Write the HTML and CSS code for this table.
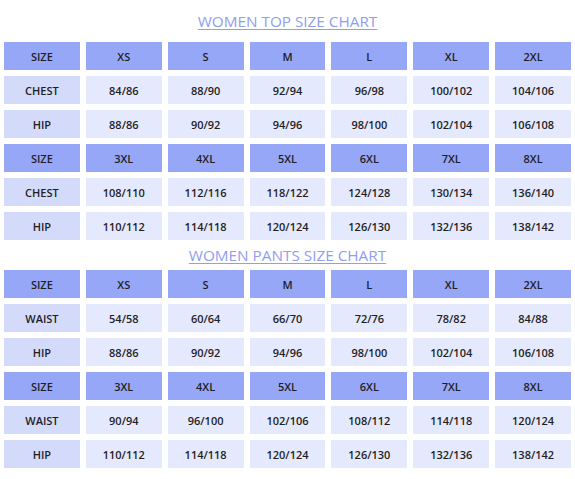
FILE: index.html
```html
<!DOCTYPE html>
<html>
<head>
<meta charset="utf-8">
<link rel="stylesheet" href="styles.css">
</head>
<body>
<div class="page">
  <h2 class="title title-first">WOMEN TOP SIZE CHART</h2>
  <div class="chart">
    <div class="cell head">SIZE</div><div class="cell head">XS</div><div class="cell head">S</div><div class="cell head">M</div><div class="cell head">L</div><div class="cell head">XL</div><div class="cell head">2XL</div>
    <div class="cell label">CHEST</div><div class="cell">84/86</div><div class="cell">88/90</div><div class="cell">92/94</div><div class="cell">96/98</div><div class="cell">100/102</div><div class="cell">104/106</div>
    <div class="cell label">HIP</div><div class="cell">88/86</div><div class="cell">90/92</div><div class="cell">94/96</div><div class="cell">98/100</div><div class="cell">102/104</div><div class="cell">106/108</div>
    <div class="cell head">SIZE</div><div class="cell head">3XL</div><div class="cell head">4XL</div><div class="cell head">5XL</div><div class="cell head">6XL</div><div class="cell head">7XL</div><div class="cell head">8XL</div>
    <div class="cell label">CHEST</div><div class="cell">108/110</div><div class="cell">112/116</div><div class="cell">118/122</div><div class="cell">124/128</div><div class="cell">130/134</div><div class="cell">136/140</div>
    <div class="cell label">HIP</div><div class="cell">110/112</div><div class="cell">114/118</div><div class="cell">120/124</div><div class="cell">126/130</div><div class="cell">132/136</div><div class="cell">138/142</div>
  </div>
  <h2 class="title">WOMEN PANTS SIZE CHART</h2>
  <div class="chart">
    <div class="cell head">SIZE</div><div class="cell head">XS</div><div class="cell head">S</div><div class="cell head">M</div><div class="cell head">L</div><div class="cell head">XL</div><div class="cell head">2XL</div>
    <div class="cell label">WAIST</div><div class="cell">54/58</div><div class="cell">60/64</div><div class="cell">66/70</div><div class="cell">72/76</div><div class="cell">78/82</div><div class="cell">84/88</div>
    <div class="cell label">HIP</div><div class="cell">88/86</div><div class="cell">90/92</div><div class="cell">94/96</div><div class="cell">98/100</div><div class="cell">102/104</div><div class="cell">106/108</div>
    <div class="cell head">SIZE</div><div class="cell head">3XL</div><div class="cell head">4XL</div><div class="cell head">5XL</div><div class="cell head">6XL</div><div class="cell head">7XL</div><div class="cell head">8XL</div>
    <div class="cell label">WAIST</div><div class="cell">90/94</div><div class="cell">96/100</div><div class="cell">102/106</div><div class="cell">108/112</div><div class="cell">114/118</div><div class="cell">120/124</div>
    <div class="cell label">HIP</div><div class="cell">110/112</div><div class="cell">114/118</div><div class="cell">120/124</div><div class="cell">126/130</div><div class="cell">132/136</div><div class="cell">138/142</div>
  </div>
</div>
</body>
</html>
```
FILE: styles.css
```css
html, body {
  margin: 0;
  padding: 0;
  background: #ffffff;
}
.page {
  width: 575px;
  padding: 0 4px;
  box-sizing: border-box;
  font-family: "Open Sans", "Liberation Sans", sans-serif;
}
.title {
  margin: 0;
  height: 30px;
  line-height: 30px;
  text-align: center;
  font-size: 15.3px;
  font-weight: 400;
  color: #8e9ef0;
  text-decoration: underline;
  text-decoration-thickness: 1px;
  text-underline-offset: 2px;
}
.title-first {
  height: 42px;
  line-height: 42px;
}
.chart {
  display: grid;
  grid-template-columns: repeat(7, 1fr);
  grid-auto-rows: 28px;
  gap: 6px;
}
.cell {
  display: flex;
  align-items: center;
  justify-content: center;
  background: #e5e9fd;
  color: #1e1e24;
  font-size: 11px;
  font-weight: 600;
}
.cell.head {
  background: #96a7f8;
}
.cell.label {
  background: #d3dafa;
}
```
